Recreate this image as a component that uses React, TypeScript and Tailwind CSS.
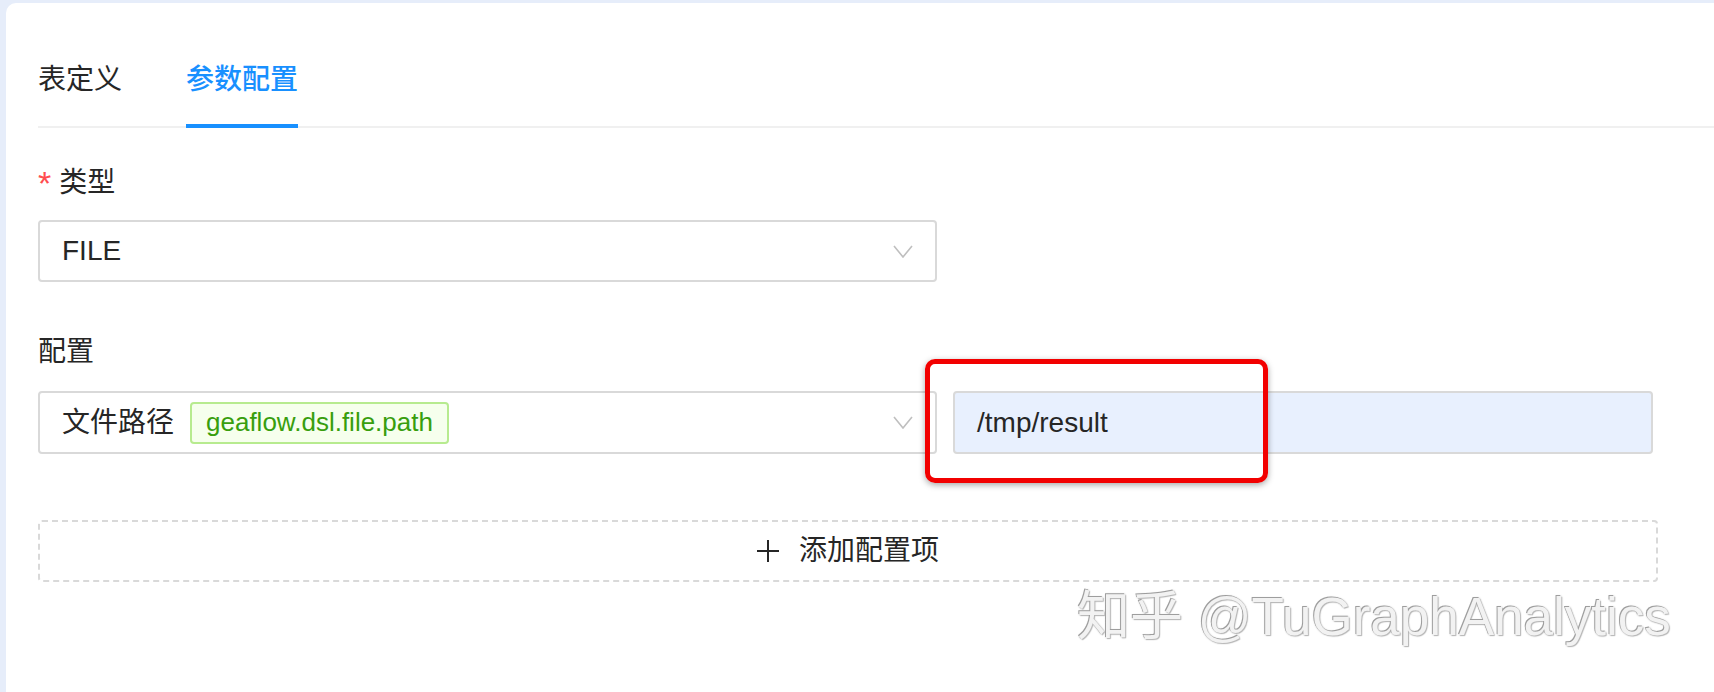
export default function App() {
  return (
    <div className="relative h-[692px] w-[1714px] overflow-hidden bg-[#e6edfa] pl-[6px] pt-[3px] font-['Liberation_Sans','Noto_Sans_CJK_SC',sans-serif] text-[28px] text-[#262626]">
      <div className="h-full rounded-tl-[10px] bg-white pl-[32px] pt-[31px]">
        {/* tabs */}
        <div className="flex gap-[64px] border-b-2 border-[#f0f0f0]">
          <div className="py-[24px] leading-[44px]">表定义</div>
          <div className="relative py-[24px] font-medium leading-[44px] text-[#1890ff]">
            参数配置
            <span className="absolute bottom-[-2px] left-0 right-0 h-[4px] bg-[#1890ff]" />
          </div>
        </div>

        <div className="mt-[33px] w-[1620px]">
          <div className="flex items-center leading-[44px]">
            <span className="mr-[8px] text-[34px] text-[#ff4d4f]">*</span>
            类型
          </div>
          <div className="mt-[15px] flex h-[62px] w-[899px] items-center justify-between rounded-[4px] border-2 border-[#d9d9d9] px-[22px]">
            <span>FILE</span>
            <Chevron />
          </div>

          <div className="mt-[48px] leading-[44px]">配置</div>
          <div className="mt-[17px] flex gap-[16px]">
            <div className="flex h-[63px] w-[899px] items-center justify-between rounded-[4px] border-2 border-[#d9d9d9] px-[22px]">
              <div className="flex items-center gap-[16px]">
                <span>文件路径</span>
                <span className="flex h-[42px] items-center rounded-[4px] border-2 border-[#b7eb8f] bg-[#f6ffed] px-[14px] text-[26px] text-[#389e0d]">
                  geaflow.dsl.file.path
                </span>
              </div>
              <Chevron />
            </div>
            <div className="flex h-[63px] w-[700px] items-center rounded-[4px] border-2 border-[#d9d9d9] bg-[#e8f0fe] pl-[22px]">
              /tmp/result
            </div>
          </div>

          <div className="mt-[66px] flex h-[62px] items-center justify-center gap-[20px] rounded-[4px] border-2 border-dashed border-[#d9d9d9]">
            <svg width="22" height="22" viewBox="0 0 22 22" fill="none" stroke="#262626" strokeWidth="2">
              <path d="M11 0v22M0 11h22" />
            </svg>
            <span>添加配置项</span>
          </div>
        </div>
      </div>

      {/* annotation */}
      <div className="absolute left-[925px] top-[359px] h-[124px] w-[343px] rounded-[10px] border-[5px] border-[#f20000] shadow-[0_2px_6px_rgba(0,0,0,0.35)]" />

      {/* watermark */}
      <div className="absolute left-[1077px] top-[585px] whitespace-nowrap font-['Liberation_Sans','Noto_Sans_CJK_SC',sans-serif] text-[53px] leading-[64px] text-[#f2f2f2] [text-shadow:-1px_-1px_0_#9e9e9e,1px_1px_1px_#b5b5b5,0_0_2px_#aaaaaa]">
        知乎 @TuGraphAnalytics
      </div>
    </div>
  );
}

function Chevron() {
  return (
    <svg width="20" height="13" viewBox="0 0 20 13" fill="none" stroke="#bfbfbf" strokeWidth="1.6">
      <polyline points="1,1 10,12 19,1" />
    </svg>
  );
}
